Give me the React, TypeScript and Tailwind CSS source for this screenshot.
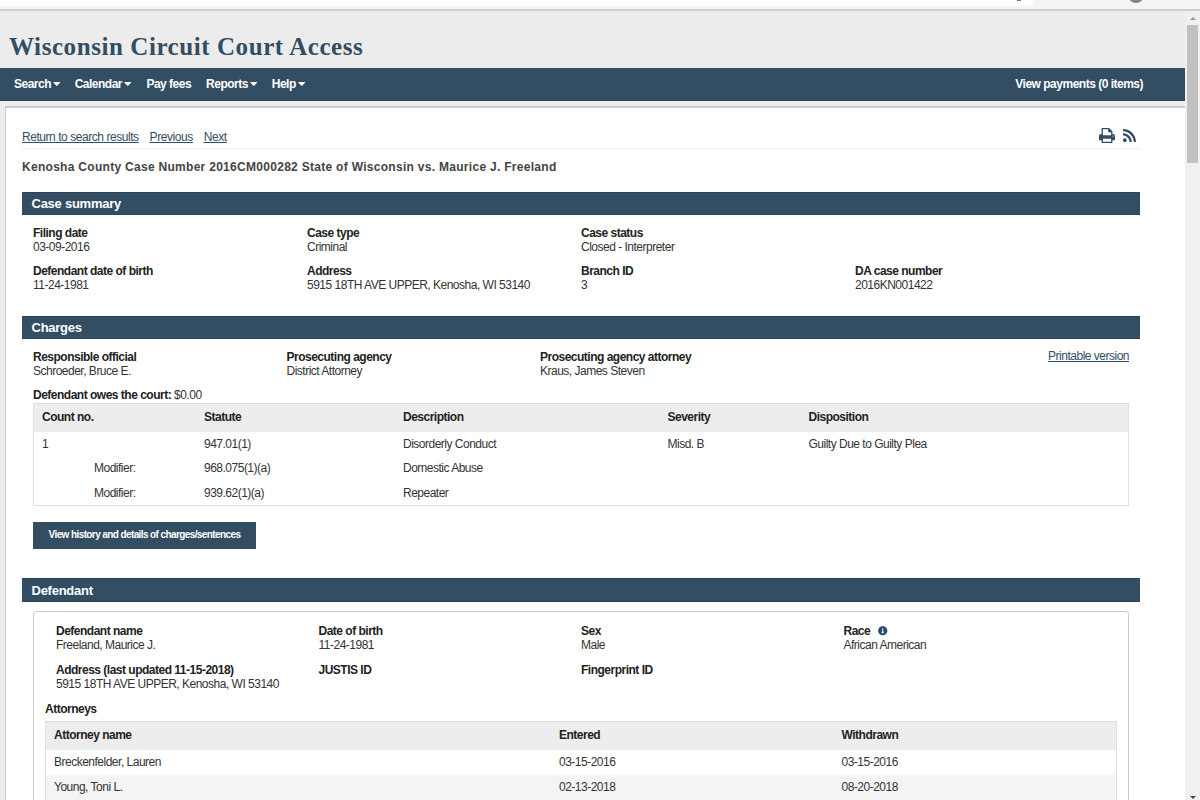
import type { ReactNode } from "react";
import { FaInfoCircle, FaRss } from "react-icons/fa";

const menu = [
  { label: "Search", caret: true, width: "w-[46px]" },
  { label: "Calendar", caret: true, width: "w-[57px]" },
  { label: "Pay fees", caret: false, width: "w-[45px]" },
  { label: "Reports", caret: true, width: "w-[51px]" },
  { label: "Help", caret: true, width: "w-[34px]" },
];

const charges = [
  { count: "1", modifier: false, statute: "947.01(1)", description: "Disorderly Conduct", severity: "Misd. B", disposition: "Guilty Due to Guilty Plea" },
  { count: "Modifier:", modifier: true, statute: "968.075(1)(a)", description: "Domestic Abuse", severity: "", disposition: "" },
  { count: "Modifier:", modifier: true, statute: "939.62(1)(a)", description: "Repeater", severity: "", disposition: "" },
];

const attorneys = [
  { name: "Breckenfelder, Lauren", entered: "03-15-2016", withdrawn: "03-15-2016" },
  { name: "Young, Toni L.", entered: "02-13-2018", withdrawn: "08-20-2018" },
];

function Caret() {
  return (
    <svg viewBox="0 0 8 5" className="h-[4.5px] w-[7.5px] shrink-0" fill="currentColor">
      <path d="M.6 0h6.8q.6.3.2.8L4.4 4.3q-.4.4-.8 0L.4.8Q0 .3.6 0Z" />
    </svg>
  );
}

function PrintIcon() {
  return (
    <svg viewBox="0 0 16 15" className="h-[15px] w-4" fill="currentColor">
      <path
        fillRule="evenodd"
        d="M2.6 0H10l3.4 3.2V6h.6a2 2 0 0 1 2 2v4.2h-2.6V15H2.6v-2.8H0V8a2 2 0 0 1 2-2h.6V0Zm1.3 1.3V7.2h8.2V4.2H9.2V1.3H3.9Zm0 9.5v2.9h8.2v-2.9H3.9ZM14 7.4a.6.6 0 1 0 0 1.2.6.6 0 0 0 0-1.2Z"
      />
    </svg>
  );
}

function SectionBar({ children }: { children: ReactNode }) {
  return (
    <h2 className="h-[23px] shrink-0 border-y border-[#29445b] bg-[#334d63] pl-[9.5px] text-[13px] leading-[21px] font-bold tracking-[-0.25px] text-white last-of-type:h-6 last-of-type:leading-[23px]">
      {children}
    </h2>
  );
}

function Field({ label, value }: { label: ReactNode; value?: string }) {
  return (
    <dl className="whitespace-nowrap">
      <dt className="font-bold text-[#222]">{label}</dt>
      <dd className="h-[14px]">{value}</dd>
    </dl>
  );
}

export default function App() {
  return (
    <div className="flex h-[800px] w-[1200px] flex-col overflow-hidden bg-[#ececec] font-['Liberation_Sans',Arial,sans-serif] text-xs leading-[14px] tracking-[-0.5px] text-[#333]">
      {/* Bottom edge of the browser toolbar */}
      <div className="flex h-[11px] shrink-0 items-start justify-between overflow-hidden border-b-2 border-[#cfcfcf] bg-[#f5f5f5]">
        <div className="flex h-1.5 w-[1033px] justify-end rounded-br bg-white pr-3">
          <div className="h-px w-1 bg-[#777]" />
        </div>
        <div className="-mt-[13px] mr-[56px] size-4 shrink-0 rounded-full bg-[#8b827c]" />
      </div>

      <div className="flex min-h-0 grow">
        <div className="flex w-[1185px] shrink-0 flex-col">
          <header className="h-[57px] shrink-0 pt-[22px] pl-[9px] font-['Liberation_Serif',serif] text-[25px] leading-7 font-bold text-[#334d63]">
            <span className="tracking-[0.57px]">Wisconsin Circuit Court Access</span>
          </header>

          <nav className="flex h-[33px] shrink-0 items-center justify-between border-b border-[#29445b] bg-[#334d63] pr-[42px] pl-[14px] font-bold text-white">
            <ul className="flex gap-[14.7px]">
              {menu.map((item) => (
                <li key={item.label} className={`flex items-center justify-between whitespace-nowrap ${item.width}`}>
                  {item.label}
                  {item.caret && <Caret />}
                </li>
              ))}
            </ul>
            <a>View payments (0 items)</a>
          </nav>

          <main className="mt-[5px] ml-[5px] flex min-h-0 grow flex-col overflow-hidden border-t-2 border-l border-[#ccc] bg-white pr-[45px] pl-4">
            <div className="flex h-[41px] shrink-0 items-end justify-between border-b border-[#eee] pb-1 text-[#334d63]">
              <div className="flex gap-[11px] tracking-[-0.45px] underline">
                <a>Return to search results</a>
                <a>Previous</a>
                <a>Next</a>
              </div>
              <div className="flex gap-[7px] pr-[3px] pb-[1.5px]">
                <PrintIcon />
                <FaRss className="size-[15px]" />
              </div>
            </div>
            <h1 className="h-[43px] shrink-0 pt-[11px] text-xs leading-[14px] font-bold tracking-[0.29px] text-[#444]">
              Kenosha County Case Number 2016CM000282 State of Wisconsin vs. Maurice J. Freeland
            </h1>

            <SectionBar>Case summary</SectionBar>
            <section className="grid h-[101px] shrink-0 grid-cols-[274px_274px_274px_1fr] grid-rows-[38px_28px] pt-[11px] pl-[11px]">
              <Field label="Filing date" value="03-09-2016" />
              <Field label="Case type" value="Criminal" />
              <Field label="Case status" value="Closed - Interpreter" />
              <div />
              <Field label="Defendant date of birth" value="11-24-1981" />
              <Field label="Address" value="5915 18TH AVE UPPER, Kenosha, WI 53140" />
              <Field label="Branch ID" value="3" />
              <Field label="DA case number" value="2016KN001422" />
            </section>

            <SectionBar>Charges</SectionBar>
            <section className="flex h-[239px] shrink-0 flex-col px-[11px] pt-[11px]">
              <div className="grid h-[38px] shrink-0 grid-cols-[253.5px_253.5px_1fr_auto]">
                <Field label="Responsible official" value="Schroeder, Bruce E." />
                <Field label="Prosecuting agency" value="District Attorney" />
                <Field label="Prosecuting agency attorney" value="Kraus, James Steven" />
                <a className="-mt-px text-[#334d63] underline">Printable version</a>
              </div>
              <p className="h-[15px] shrink-0">
                <b className="text-[#222]">Defendant owes the court:</b> $0.00
              </p>
              <table className="w-full table-fixed border-separate border-spacing-0 border border-[#ddd] text-left">
                <colgroup>
                  <col className="w-[162px]" />
                  <col className="w-[199px]" />
                  <col className="w-[264.5px]" />
                  <col className="w-[141px]" />
                  <col />
                </colgroup>
                <thead>
                  <tr className="h-7 bg-[#ededed] text-[#222]">
                    <th className="pb-0.5 pl-2">Count no.</th>
                    <th className="pb-0.5 pl-2">Statute</th>
                    <th className="pb-0.5 pl-2">Description</th>
                    <th className="pb-0.5 pl-2">Severity</th>
                    <th className="pb-0.5 pl-2">Disposition</th>
                  </tr>
                </thead>
                <tbody>
                  {charges.map((c) => (
                    <tr key={c.statute} className="h-[24.3px]">
                      <td className={c.modifier ? "pl-[60px]" : "pl-2"}>{c.count}</td>
                      <td className="pl-2">{c.statute}</td>
                      <td className="pl-2">{c.description}</td>
                      <td className="pl-2">{c.severity}</td>
                      <td className="pl-2">{c.disposition}</td>
                    </tr>
                  ))}
                </tbody>
              </table>
              <button className="mt-4 h-[27px] w-[223px] shrink-0 bg-[#334d63] text-[10px] font-bold tracking-[-0.6px] text-white">
                View history and details of charges/sentences
              </button>
            </section>

            <SectionBar>Defendant</SectionBar>
            <section className="mx-[11px] mt-[9px] h-[220px] shrink-0 rounded-t-[3px] border border-[#ccc] px-[11px] pt-[12px]">
              <div className="grid grid-cols-[262.5px_262.5px_262.5px_1fr] grid-rows-[39px_39px] pl-[11px]">
                <Field label="Defendant name" value="Freeland, Maurice J." />
                <Field label="Date of birth" value="11-24-1981" />
                <Field label="Sex" value="Male" />
                <Field
                  label={
                    <span className="flex items-center gap-2">
                      Race <FaInfoCircle className="size-[9.5px] text-[#2b4c68]" />
                    </span>
                  }
                  value="African American"
                />
                <Field label="Address (last updated 11-15-2018)" value="5915 18TH AVE UPPER, Kenosha, WI 53140" />
                <Field label="JUSTIS ID" />
                <Field label="Fingerprint ID" />
              </div>
              <h3 className="h-[19px] font-bold text-[#222]">Attorneys</h3>
              <table className="w-[1072px] table-fixed border-separate border-spacing-0 border border-b-0 border-[#ddd] text-left">
                <colgroup>
                  <col className="w-[505px]" />
                  <col className="w-[282.5px]" />
                  <col />
                </colgroup>
                <thead>
                  <tr className="h-7 bg-[#ededed] text-[#222]">
                    <th className="pb-0.5 pl-2">Attorney name</th>
                    <th className="pb-0.5 pl-2">Entered</th>
                    <th className="pb-0.5 pl-2">Withdrawn</th>
                  </tr>
                </thead>
                <tbody>
                  {attorneys.map((a) => (
                    <tr key={a.name} className="h-[25px] even:bg-[#f4f4f4]">
                      <td className="pb-0.5 pl-2">{a.name}</td>
                      <td className="pb-0.5 pl-2">{a.entered}</td>
                      <td className="pb-0.5 pl-2">{a.withdrawn}</td>
                    </tr>
                  ))}
                </tbody>
              </table>
            </section>
          </main>
        </div>

        {/* Window scrollbar */}
        <div className="flex w-[15px] shrink-0 flex-col items-center bg-[#f0f0f0] pt-1.5">
          <div className="h-0 w-0 border-x-[3px] border-b-[3px] border-x-transparent border-b-[#999]" />
          <div className="mt-[5px] h-[138px] w-[11px] bg-[#c1c1c1]" />
          <div className="mt-auto mb-px h-0 w-0 border-x-[3px] border-t-[3px] border-x-transparent border-t-[#444]" />
        </div>
      </div>
    </div>
  );
}
